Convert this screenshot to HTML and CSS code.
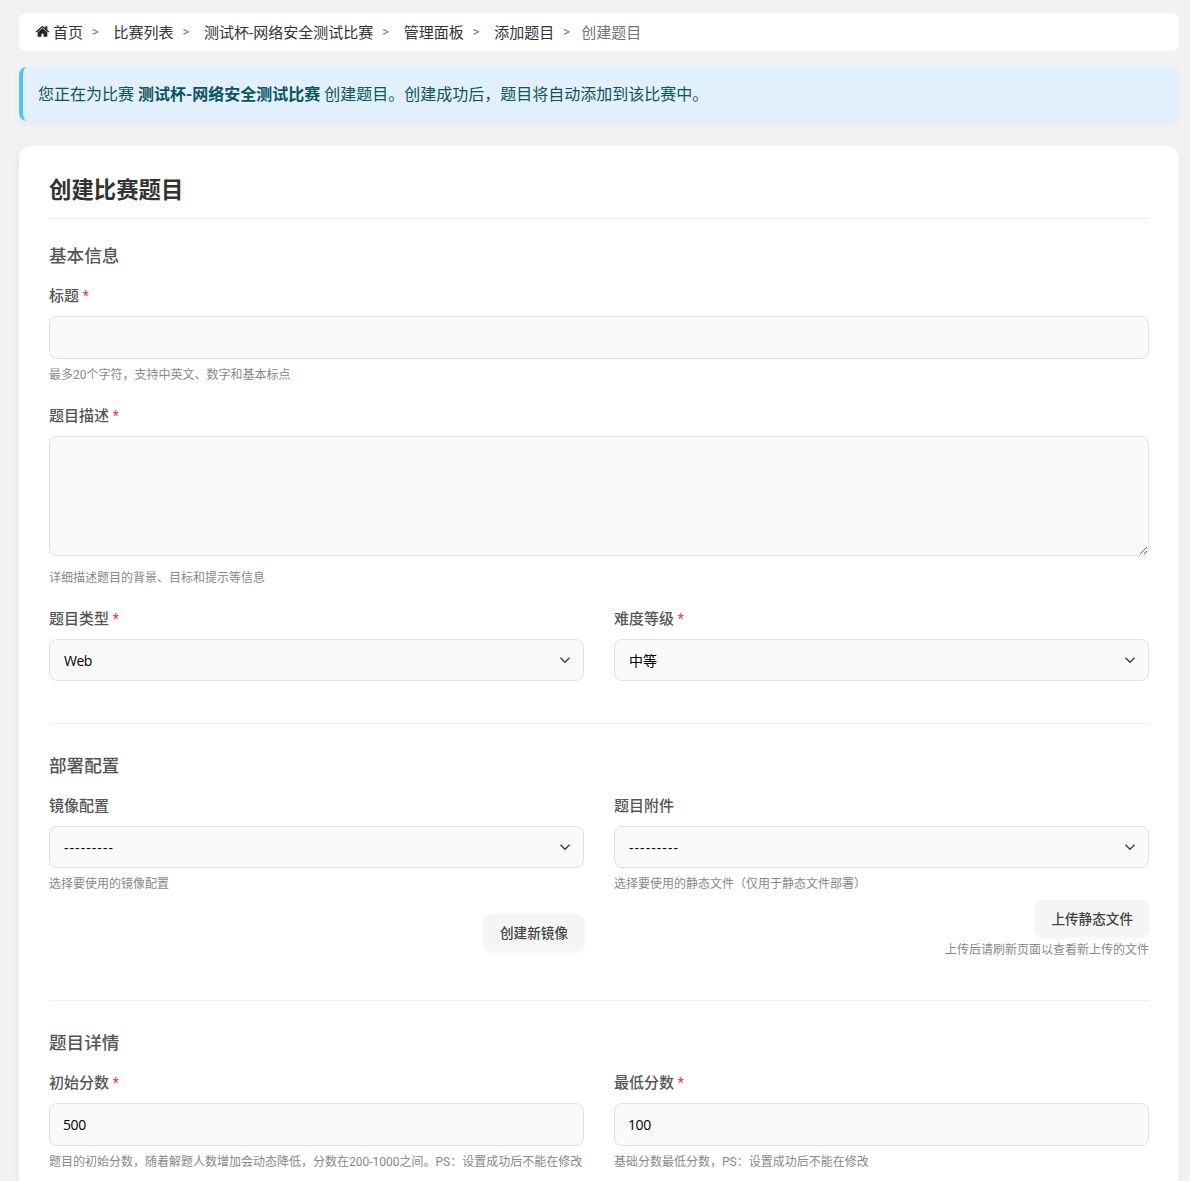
FILE: index.html
```html
<!DOCTYPE html>
<html lang="zh-CN">
<head>
<meta charset="utf-8">
<title>创建比赛题目</title>
<link rel="stylesheet" href="styles.css">
</head>
<body>
<main class="page">
  <nav class="crumbs">
    <a class="crumb"><svg class="home" viewBox="0 0 1664 1792" aria-hidden="true"><path d="M1408 992v480q0 26-19 45t-45 19H960v-384H704v384H320q-26 0-45-19t-19-45V992q0-1 .5-3t.5-3l575-474 575 474q1 2 1 6zm223-69l-62 74q-8 9-21 11h-3q-13 0-21-7L832 424 140 1001q-12 8-24 7-13-2-21-11l-62-74q-8-10-7-23.500T37 878L756 279q32-26 76-26t76 26l244 204V288q0-14 9-23t23-9h192q14 0 23 9t9 23v408l219 182q10 8 11 21.500t-7 23.500z"/></svg>首页</a>
    <span class="sep">&gt;</span>
    <a class="crumb">比赛列表</a>
    <span class="sep">&gt;</span>
    <a class="crumb">测试杯-网络安全测试比赛</a>
    <span class="sep">&gt;</span>
    <a class="crumb">管理面板</a>
    <span class="sep">&gt;</span>
    <a class="crumb">添加题目</a>
    <span class="sep sep-last">&gt;</span>
    <span class="crumb-current">创建题目</span>
  </nav>

  <div class="alert">您正在为比赛 <strong>测试杯-网络安全测试比赛</strong> 创建题目。创建成功后，题目将自动添加到该比赛中。</div>

  <section class="card">
    <h1 class="card-title">创建比赛题目</h1>
    <form>
      <div class="section">
        <h2 class="section-title">基本信息</h2>
        <div class="field field-title">
          <label class="label">标题 <span class="req">*</span></label>
          <input class="control control-input" type="text">
          <p class="help">最多20个字符，支持中英文、数字和基本标点</p>
        </div>
        <div class="field field-desc">
          <label class="label">题目描述 <span class="req">*</span></label>
          <textarea class="control control-area"></textarea>
          <p class="help help-area">详细描述题目的背景、目标和提示等信息</p>
        </div>
        <div class="grid">
          <div class="field">
            <label class="label">题目类型 <span class="req">*</span></label>
            <div class="select"><span class="value-latin">Web</span><svg class="chev" viewBox="0 0 16 16"><path d="M2 5l6 6 6-6"/></svg></div>
          </div>
          <div class="field">
            <label class="label">难度等级 <span class="req">*</span></label>
            <div class="select">中等<svg class="chev" viewBox="0 0 16 16"><path d="M2 5l6 6 6-6"/></svg></div>
          </div>
        </div>
      </div>

      <div class="section">
        <h2 class="section-title">部署配置</h2>
        <div class="grid">
          <div class="field">
            <label class="label">镜像配置</label>
            <div class="select"><span class="value-dash">---------</span><svg class="chev" viewBox="0 0 16 16"><path d="M2 5l6 6 6-6"/></svg></div>
            <p class="help">选择要使用的镜像配置</p>
            <div class="actions actions-image"><button type="button" class="btn">创建新镜像</button></div>
          </div>
          <div class="field">
            <label class="label">题目附件</label>
            <div class="select"><span class="value-dash">---------</span><svg class="chev" viewBox="0 0 16 16"><path d="M2 5l6 6 6-6"/></svg></div>
            <p class="help">选择要使用的静态文件（仅用于静态文件部署）</p>
            <div class="actions actions-upload"><button type="button" class="btn">上传静态文件</button></div>
            <p class="help help-right">上传后请刷新页面以查看新上传的文件</p>
          </div>
        </div>
      </div>

      <div class="section section-last">
        <h2 class="section-title">题目详情</h2>
        <div class="grid">
          <div class="field">
            <label class="label">初始分数 <span class="req">*</span></label>
            <input class="control control-input control-num" type="text" value="500">
            <p class="help">题目的初始分数，随着解题人数增加会动态降低，分数在200-1000之间。PS：设置成功后不能在修改</p>
          </div>
          <div class="field">
            <label class="label">最低分数 <span class="req">*</span></label>
            <input class="control control-input control-num" type="text" value="100">
            <p class="help">基础分数最低分数，PS：设置成功后不能在修改</p>
          </div>
        </div>
      </div>
    </form>
  </section>
</main>
</body>
</html>
```

FILE: styles.css
```css
* { box-sizing: border-box; }
html, body { margin: 0; padding: 0; height: 1181px; overflow: hidden; }
body {
  background: #f1f2f4;
  color: #333;
  font-family: Roboto, "Noto Sans CJK SC", sans-serif;
  font-size: 14px;
}
.page { padding: 13px 11px 0 19px; }

.crumbs {
  display: flex;
  align-items: center;
  height: 38px;
  padding: 0 16px 2px;
  background: #fff;
  border-radius: 8px;
  font-size: 15px;
  color: #212529;
}
.crumb { display: flex; align-items: center; color: #333; }
.home { width: 15px; height: 15px; margin-right: 3px; fill: #212529; }
.sep { width: 8px; margin: 0 13.5px 0 9px; color: #6c757d; font-size: 13px; }
.sep-last { margin-right: 10px; }
.crumb-current { color: #6c757d; }

.alert {
  margin-top: 16px;
  height: 54px;
  padding: 0 15px 2px;
  display: flex;
  align-items: center;
  white-space: pre-wrap;
  background: #e1f0fb;
  border-left: 4px solid #4fc3f7;
  border-radius: 8px;
  box-shadow: 0 2px 8px rgba(0, 0, 0, .05);
  color: #0c5460;
  font-size: 16px;
}
.alert strong { font-weight: 700; }

.card {
  margin-top: 25px;
  padding: 30px;
  height: 1100px;
  background: #fff;
  border-radius: 12px;
  box-shadow: 0 2px 12px rgba(0, 0, 0, .05);
}
.card-title {
  margin: 0;
  height: 43px;
  font-size: 22.4px;
  line-height: 28px;
  font-weight: 700;
  color: #333;
  border-bottom: 1px solid #eee;
}

.section { padding-top: 25px; padding-bottom: 42px; border-bottom: 1px solid #eee; }
.section + .section { padding-top: 30px; }
.section-last { border-bottom: 0; }
.section-title {
  margin: 0 0 17px;
  font-size: 17.6px;
  line-height: 25px;
  font-weight: 500;
  color: #555;
}

.field { min-width: 0; }
.field-title { margin-bottom: 23px; }
.field-desc { margin-bottom: 23px; }
.label {
  display: block;
  margin-bottom: 10px;
  font-size: 15px;
  line-height: 20px;
  font-weight: 500;
  color: #555;
}
.req { color: #e53935; font-size: 14px; font-weight: 400; }

.control {
  display: block;
  width: 100%;
  padding: 0 13px;
  background: #fafafa;
  border: 1px solid #e0e0e0;
  border-radius: 8px;
  font: inherit;
  color: #000;
  outline: none;
}
.control-input { height: 43px; }
.control-num { font-family: "Open Sans", sans-serif; letter-spacing: -.4px; }
.control-area { height: 120px; resize: vertical; }

.select {
  display: flex;
  align-items: center;
  justify-content: space-between;
  height: 42px;
  padding: 0 12px 0 14px;
  background: #fafafa;
  border: 1px solid #e0e0e0;
  border-radius: 8px;
  color: #000;
}
.value-latin { font-family: "Open Sans", sans-serif; letter-spacing: -.5px; }
.value-dash { font-family: "Open Sans", sans-serif; letter-spacing: 1.05px; }
.chev { width: 12px; height: 12px; fill: none; stroke: #444; stroke-width: 2; }

.help {
  margin: 8px 0 0;
  font-size: 12px;
  line-height: 16px;
  color: #888;
}
.help-area { margin-top: 14px; }
.help-right { text-align: right; margin-top: 5px; }

.grid { display: grid; grid-template-columns: 1fr 1fr; column-gap: 30px; }

.actions { display: flex; justify-content: flex-end; }
.actions-image { margin-top: 22px; }
.actions-upload { margin-top: 8px; }
.btn {
  height: 37px;
  padding: 0 16px 2px;
  background: #f5f5f5;
  border: 0;
  border-radius: 8px;
  box-shadow: 0 1px 4px rgba(0, 0, 0, .05);
  font: inherit;
  font-size: 13.6px;
  font-weight: 500;
  color: #444;
}
```
